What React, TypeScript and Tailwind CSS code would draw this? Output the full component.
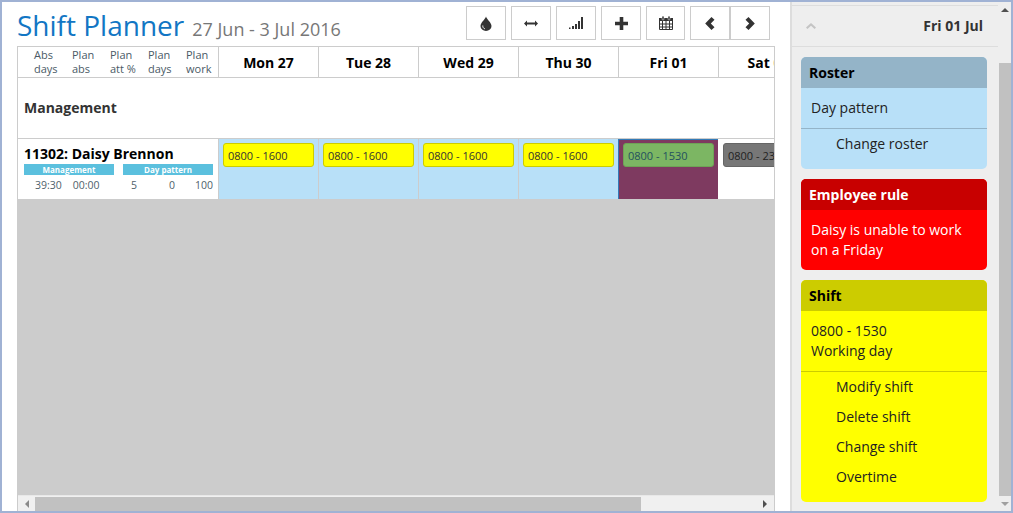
const days = [
  { label: "Mon 27", shift: "0800 - 1600", kind: "roster" },
  { label: "Tue 28", shift: "0800 - 1600", kind: "roster" },
  { label: "Wed 29", shift: "0800 - 1600", kind: "roster" },
  { label: "Thu 30", shift: "0800 - 1600", kind: "roster" },
  { label: "Fri 01", shift: "0800 - 1530", kind: "selected" },
  { label: "Sat 02", shift: "0800 - 2330", kind: "off" },
];

function ToolButton({ children, w = "w-10" }: { children: React.ReactNode; w?: string }) {
  return (
    <div className={`${w} h-[34px] flex items-center justify-center border border-[#cccccc] bg-white shrink-0`}>
      {children}
    </div>
  );
}

function Tint() {
  return (
    <svg width="12" height="15" viewBox="0 0 12 15">
      <path d="M6 0.5C6.5 3 11.5 6.5 11.5 10A5.5 5 0 0 1 0.5 10C0.5 6.5 5.5 3 6 0.5Z" fill="#333" />
      <path d="M2.8 9.5C2.6 11 3.4 12.4 4.8 12.8" stroke="#fff" strokeWidth="1" fill="none" />
    </svg>
  );
}
function Resize() {
  return (
    <svg width="14" height="7" viewBox="0 0 14 7">
      <path d="M0 3.5L3 0.5V2.5H11V0.5L14 3.5L11 6.5V4.5H3V6.5Z" fill="#333" />
    </svg>
  );
}
function Bars() {
  return (
    <svg width="14" height="12" viewBox="0 0 14 12">
      <rect x="0" y="10.5" width="1.5" height="1.5" fill="#333" />
      <rect x="3" y="9" width="2" height="3" fill="#333" />
      <rect x="6" y="7" width="2" height="5" fill="#333" />
      <rect x="9" y="4" width="2" height="8" fill="#333" />
      <rect x="12" y="0" width="2" height="12" fill="#333" />
    </svg>
  );
}
function Plus() {
  return (
    <svg width="13" height="13" viewBox="0 0 13 13">
      <path d="M4.7 0H8.3V4.7H13V8.3H8.3V13H4.7V8.3H0V4.7H4.7Z" fill="#333" />
    </svg>
  );
}
function Calendar() {
  return (
    <svg width="14" height="14" viewBox="0 0 14 14">
      <path d="M0.5 2.5H13.5V13.5H0.5Z" fill="#fff" stroke="#333" />
      <rect x="0" y="2" width="14" height="3" fill="#333" />
      <rect x="3" y="0" width="2" height="4" rx="1" fill="#333" stroke="#fff" strokeWidth="0.5" />
      <rect x="9" y="0" width="2" height="4" rx="1" fill="#333" stroke="#fff" strokeWidth="0.5" />
      <path d="M0 8H14M0 11H14M3.5 5V14M7 5V14M10.5 5V14" stroke="#333" strokeWidth="1" />
    </svg>
  );
}
function ChevronLeft() {
  return (
    <svg width="10" height="13" viewBox="0 0 10 13">
      <path d="M6.5 0L9.5 2.8L5.8 6.5L9.5 10.2L6.5 13L0.2 6.5Z" fill="#333" />
    </svg>
  );
}
function ChevronRight() {
  return (
    <svg width="10" height="13" viewBox="0 0 10 13">
      <path d="M3.5 0L0.5 2.8L4.2 6.5L0.5 10.2L3.5 13L9.8 6.5Z" fill="#333" />
    </svg>
  );
}

function Arrow({ dir, fill = "#505050" }: { dir: "up" | "down" | "left" | "right"; fill?: string }) {
  const d = {
    up: "M0 4L4 0L8 4Z",
    down: "M0 0H8L4 4Z",
    left: "M4 0V8L0 4Z",
    right: "M0 0L4 4L0 8Z",
  }[dir];
  const v = dir === "up" || dir === "down" ? "0 0 8 4" : "0 0 4 8";
  return (
    <svg width={dir === "up" || dir === "down" ? 8 : 4} height={dir === "up" || dir === "down" ? 4 : 8} viewBox={v}>
      <path d={d} fill={fill} />
    </svg>
  );
}

function HeadCell({ a, b, w }: { a: string; b: string; w: string }) {
  return (
    <div className={`${w} text-[11px] leading-[14px] text-[#4a5a66]`}>
      <div>{a}</div>
      <div>{b}</div>
    </div>
  );
}

function Card({
  title,
  head,
  body,
  children,
  text = "text-[#222]",
  titleText = "text-black",
}: {
  title: string;
  head: string;
  body: string;
  children: React.ReactNode;
  text?: string;
  titleText?: string;
}) {
  return (
    <div className={`w-[186px] rounded-[5px] overflow-hidden ${body} ${text}`}>
      <div className={`h-[31px] px-2 flex items-center text-[14px] font-bold ${head} ${titleText}`}>{title}</div>
      {children}
    </div>
  );
}

export default function App() {
  return (
    <div
      className="w-[1013px] h-[513px] border-x-2 border-t-2 border-b-2 border-[#a0b2d4] flex bg-white overflow-hidden"
      style={{ fontFamily: '"Open Sans", sans-serif' }}
    >
      {/* main area */}
      <div className="w-[788px] shrink-0 pl-[15px] flex flex-col">
        <div className="h-11 flex items-start">
          <div className="flex items-baseline mt-[3px] whitespace-nowrap">
            <span className="text-[28px] leading-[40px] text-[#1276c4]">Shift Planner</span>
            <span className="text-[18px] text-[#777] ml-2">27 Jun - 3 Jul 2016</span>
          </div>
          <div className="ml-auto mr-[20px] mt-1 flex">
            <ToolButton><Tint /></ToolButton>
            <div className="w-[5px]" />
            <ToolButton><Resize /></ToolButton>
            <div className="w-[5px]" />
            <ToolButton><Bars /></ToolButton>
            <div className="w-[5px]" />
            <ToolButton><Plus /></ToolButton>
            <div className="w-[5px]" />
            <ToolButton w="w-[39px]"><Calendar /></ToolButton>
            <div className="w-[5px]" />
            <ToolButton><ChevronLeft /></ToolButton>
            <ToolButton><ChevronRight /></ToolButton>
          </div>
        </div>

        {/* grid */}
        <div className="w-[758px] h-[465px] flex flex-col border-l border-r border-[#cccccc] bg-[#cccccc] overflow-hidden">
          <div className="h-[449px] flex flex-col overflow-hidden">
            {/* header row */}
            <div className="h-[32px] bg-white border-y border-[#cccccc] flex shrink-0">
              <div className="w-[200px] shrink-0 flex pl-[16px] pt-px whitespace-nowrap">
                <HeadCell a="Abs" b="days" w="w-[38px]" />
                <HeadCell a="Plan" b="abs" w="w-[38px]" />
                <HeadCell a="Plan" b="att %" w="w-[38px]" />
                <HeadCell a="Plan" b="days" w="w-[38px]" />
                <HeadCell a="Plan" b="work" w="w-[32px]" />
              </div>
              {days.map((d) => (
                <div
                  key={d.label}
                  className="w-[100px] shrink-0 border-l border-[#cccccc] flex items-center justify-center text-[14px] font-bold text-black whitespace-nowrap"
                >
                  {d.label}
                </div>
              ))}
            </div>
            {/* group row */}
            <div className="h-[61px] bg-white border-b border-[#cccccc] flex items-center pl-[6px] pb-[2px] text-[14px] font-bold text-[#333] shrink-0">
              Management
            </div>
            {/* employee row */}
            <div className="h-[60px] flex shrink-0">
              <div className="w-[200px] shrink-0 bg-white pl-[6px] pt-[5px]">
                <div className="text-[14px] font-bold text-black leading-[20px] whitespace-nowrap">11302: Daisy Brennon</div>
                <div className="flex gap-[9px]">
                  <div className="w-[90px]">
                    <div className="h-[11px] bg-[#5bc0de] text-white text-[8px] font-bold leading-[11px] text-center">Management</div>
                    <div className="flex text-[10.5px] leading-[20px] text-[#4f5f6b] pl-[11px] gap-[11px]">
                      <span>39:30</span>
                      <span>00:00</span>
                    </div>
                  </div>
                  <div className="w-[90px]">
                    <div className="h-[11px] bg-[#5bc0de] text-white text-[8px] font-bold leading-[11px] text-center">Day pattern</div>
                    <div className="flex justify-between text-[10.5px] leading-[20px] text-[#4f5f6b] pl-[8px]">
                      <span>5</span>
                      <span className="ml-[12px]">0</span>
                      <span>100</span>
                    </div>
                  </div>
                </div>
              </div>
              {days.map((d) => (
                <div
                  key={d.label}
                  className={`w-[100px] shrink-0 pl-[4px] ${
                    d.kind === "roster"
                      ? "pt-[4px] bg-[#b8e0f8] border-l border-[#cccccc]"
                      : d.kind === "selected"
                        ? "pt-[3px] bg-[#7e3a60] border-l border-t border-[#337ab7]"
                        : "pt-[4px] bg-white border-l border-white"
                  }`}
                >
                  <div
                    className={`w-[91px] h-6 rounded-[3px] border pl-[4px] text-[11px] leading-[24px] whitespace-nowrap ${
                      d.kind === "roster"
                        ? "bg-[#ffff00] border-[#cccc00] text-[#333]"
                        : d.kind === "selected"
                          ? "bg-[#7cb663] border-[#6ea356] text-[#24515f]"
                          : "bg-[#777777] border-[#666666] text-[#222]"
                    }`}
                  >
                    {d.shift}
                  </div>
                </div>
              ))}
            </div>
          </div>
          {/* horizontal scrollbar */}
          <div className="h-[16px] shrink-0 bg-[#f0f0f0] border-t border-[#e8e8e8] flex items-stretch">
            <div className="w-[17px] flex items-center justify-center"><Arrow dir="left" fill="#8a8a8a" /></div>
            <div className="w-[606px] mt-px bg-[#c1c1c1]" />
            <div className="flex-1 flex items-center justify-end pr-[7px]"><Arrow dir="right" /></div>
          </div>
        </div>
      </div>

      {/* right panel */}
      <div className="w-[208px] shrink-0 bg-[#eeeeee] border-l-2 border-[#dddddd] flex flex-col">
        <div className="mt-[3px] h-[42px] border-y border-[#dddddd] flex items-center justify-between pl-[14px] pr-[15px]">
          <svg width="10" height="6" viewBox="0 0 10 6">
            <path d="M5 0L10 4.5L8.6 6L5 2.8L1.4 6L0 4.5Z" fill="#c4c4c4" />
          </svg>
          <span className="text-[14px] font-bold text-[#333] mb-[2px]">Fri 01 Jul</span>
        </div>
        <div className="pl-[9px] pt-[10px] flex flex-col gap-[10px]">
          <Card title="Roster" head="bg-[#94b4c8]" body="bg-[#b8e0f8]">
            <div className="h-[41px] border-b border-[#94b4c8] flex items-center pl-[10px] pb-[2px] text-[14px]">Day pattern</div>
            <div className="h-[40px] pl-[35px] pt-[4px] text-[14px] leading-[22px]">Change roster</div>
          </Card>
          <Card title="Employee rule" head="bg-[#c80000]" body="bg-[#ff0000]" text="text-white" titleText="text-white">
            <div className="h-[60px] px-[10px] pt-[10px] text-[14px] leading-[20px]">
              Daisy is unable to work on a Friday
            </div>
          </Card>
          <Card title="Shift" head="bg-[#cccc00]" body="bg-[#ffff00]">
            <div className="h-[61px] border-b border-[#cccc00] px-[10px] pt-[10px] text-[14px] leading-[20px]">
              <div>0800 - 1530</div>
              <div>Working day</div>
            </div>
            <div className="pl-[35px] pt-[0px] pb-[10px] text-[14px] leading-[30px]">
              <div>Modify shift</div>
              <div>Delete shift</div>
              <div>Change shift</div>
              <div>Overtime</div>
            </div>
          </Card>
        </div>
      </div>

      {/* vertical scrollbar */}
      <div className="w-[13px] shrink-0 bg-[#eeeeee] flex flex-col">
        <div className="h-[15px] flex items-center justify-center pt-1 pb-[3px]"><Arrow dir="up" /></div>
        <div className="h-[46px]" />
        <div className="flex-1 bg-[#c1c1c1] ml-px" />
        <div className="h-[15px] flex items-center justify-center"><Arrow dir="down" fill="#a0a0a0" /></div>
      </div>
    </div>
  );
}
